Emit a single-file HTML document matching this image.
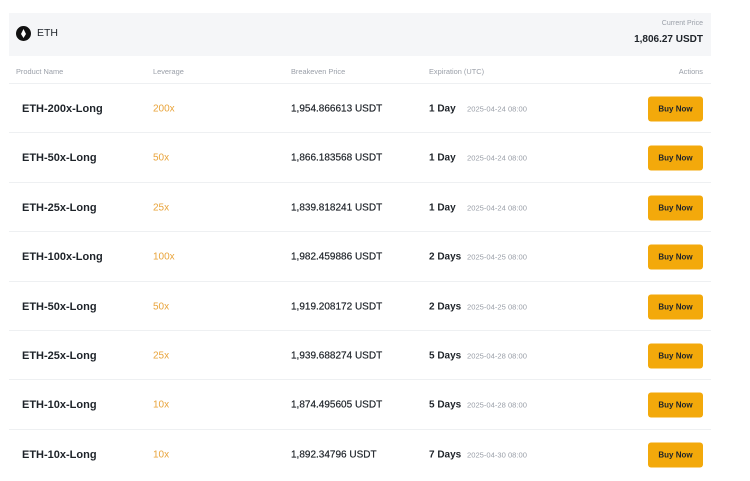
<!DOCTYPE html>
<html><head><style>
body{margin:0;width:750px;height:481px;background:#fff;font-family:"Liberation Sans",sans-serif;position:relative;overflow:hidden}
.hdr{position:absolute;left:9px;top:13px;width:702px;height:43px;background:#f5f6f8}
.a{position:absolute;white-space:nowrap}
.lbl{font-size:7.4px;color:#9a9fa8;top:67px}
.row{position:absolute;left:9px;width:702px;height:49px;border-top:1px solid #eef0f2}
.row .a{top:50%;transform:translateY(-50%)}
.pn{left:13px;font-size:11px;font-weight:bold;color:#1e2329}
.lv{left:144px;font-size:10px;color:#e9a43b}
.bp{left:282px;font-size:10px;color:#1e2329;-webkit-text-stroke:0.2px #1e2329}
.d{left:420px;font-size:10px;font-weight:bold;color:#1e2329}
.dt{left:458px;font-size:7.6px;color:#9a9fa8}
.btn{right:8px;width:55px;height:25px;background:#f3a90b;border-radius:3px;font-size:8px;font-weight:bold;color:#1e2329;text-align:center;line-height:25px}
</style></head><body>
<div class="hdr"></div>
<div class="a" style="left:16px;top:26px;width:15px;height:15px;border-radius:50%;background:#111"><div style="position:absolute;left:5px;top:3px;width:5px;height:9px;background:#fff;clip-path:polygon(50% 0,100% 55%,50% 100%,0 55%)"></div></div>
<div class="a" style="left:37px;top:27px;font-size:10.5px;color:#1e2329">ETH</div>
<div class="a" style="right:47px;top:20px;font-size:7px;color:#9a9fa8">Current Price</div>
<div class="a" style="right:47px;top:34px;font-size:10px;font-weight:bold;color:#1e2329">1,806.27 USDT</div>
<div class="a lbl" style="left:16px">Product Name</div>
<div class="a lbl" style="left:153px">Leverage</div>
<div class="a lbl" style="left:291px">Breakeven Price</div>
<div class="a lbl" style="left:429px">Expiration (UTC)</div>
<div class="a lbl" style="right:47px">Actions</div>

<div class="row" style="top:83px"><div class="a pn">ETH-200x-Long</div><div class="a lv">200x</div><div class="a bp">1,954.866613 USDT</div><div class="a d">1 Day</div><div class="a dt">2025-04-24 08:00</div><div class="a btn">Buy Now</div></div>
<div class="row" style="top:132px"><div class="a pn">ETH-50x-Long</div><div class="a lv">50x</div><div class="a bp">1,866.183568 USDT</div><div class="a d">1 Day</div><div class="a dt">2025-04-24 08:00</div><div class="a btn">Buy Now</div></div>
<div class="row" style="top:182px"><div class="a pn">ETH-25x-Long</div><div class="a lv">25x</div><div class="a bp">1,839.818241 USDT</div><div class="a d">1 Day</div><div class="a dt">2025-04-24 08:00</div><div class="a btn">Buy Now</div></div>
<div class="row" style="top:231px"><div class="a pn">ETH-100x-Long</div><div class="a lv">100x</div><div class="a bp">1,982.459886 USDT</div><div class="a d">2 Days</div><div class="a dt">2025-04-25 08:00</div><div class="a btn">Buy Now</div></div>
<div class="row" style="top:281px"><div class="a pn">ETH-50x-Long</div><div class="a lv">50x</div><div class="a bp">1,919.208172 USDT</div><div class="a d">2 Days</div><div class="a dt">2025-04-25 08:00</div><div class="a btn">Buy Now</div></div>
<div class="row" style="top:330px"><div class="a pn">ETH-25x-Long</div><div class="a lv">25x</div><div class="a bp">1,939.688274 USDT</div><div class="a d">5 Days</div><div class="a dt">2025-04-28 08:00</div><div class="a btn">Buy Now</div></div>
<div class="row" style="top:379px"><div class="a pn">ETH-10x-Long</div><div class="a lv">10x</div><div class="a bp">1,874.495605 USDT</div><div class="a d">5 Days</div><div class="a dt">2025-04-28 08:00</div><div class="a btn">Buy Now</div></div>
<div class="row" style="top:429px"><div class="a pn">ETH-10x-Long</div><div class="a lv">10x</div><div class="a bp">1,892.34796 USDT</div><div class="a d">7 Days</div><div class="a dt">2025-04-30 08:00</div><div class="a btn">Buy Now</div></div>
</body></html>
